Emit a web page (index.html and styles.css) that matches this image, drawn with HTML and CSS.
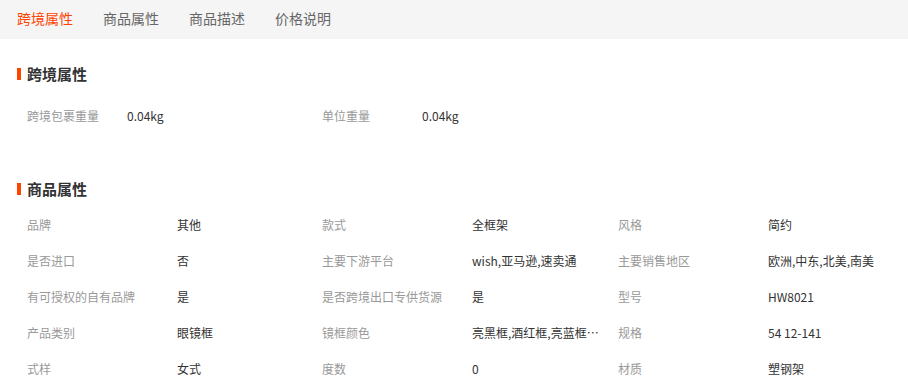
FILE: index.html
```html
<!DOCTYPE html>
<html lang="zh-CN">
<head>
  <meta charset="UTF-8">
  <meta name="viewport" content="width=device-width, initial-scale=1.0">
  <title>商品详情</title>
  <link rel="stylesheet" href="styles.css">
</head>
<body>
  <div class="tabs">
    <a href="#cross" class="tab active">跨境属性</a>
    <a href="#attrs" class="tab">商品属性</a>
    <a href="#desc" class="tab">商品描述</a>
    <a href="#price" class="tab">价格说明</a>
  </div>

  <div class="section section-cross" id="cross">
    <h2 class="section-title">跨境属性</h2>
    <div class="attr-grid">
      <div class="attr-item">
        <span class="attr-label">跨境包裹重量</span>
        <span class="attr-value">0.04kg</span>
      </div>
      <div class="attr-item">
        <span class="attr-label">单位重量</span>
        <span class="attr-value">0.04kg</span>
      </div>
    </div>
  </div>

  <div class="section section-attrs" id="attrs">
    <h2 class="section-title">商品属性</h2>
    <div class="attr-grid">
      <div class="attr-item"><span class="attr-label">品牌</span><span class="attr-value">其他</span></div>
      <div class="attr-item"><span class="attr-label">款式</span><span class="attr-value">全框架</span></div>
      <div class="attr-item"><span class="attr-label">风格</span><span class="attr-value">简约</span></div>

      <div class="attr-item"><span class="attr-label">是否进口</span><span class="attr-value">否</span></div>
      <div class="attr-item"><span class="attr-label">主要下游平台</span><span class="attr-value">wish,亚马逊,速卖通</span></div>
      <div class="attr-item"><span class="attr-label">主要销售地区</span><span class="attr-value">欧洲,中东,北美,南美</span></div>

      <div class="attr-item"><span class="attr-label">有可授权的自有品牌</span><span class="attr-value">是</span></div>
      <div class="attr-item"><span class="attr-label">是否跨境出口专供货源</span><span class="attr-value">是</span></div>
      <div class="attr-item"><span class="attr-label">型号</span><span class="attr-value">HW8021</span></div>

      <div class="attr-item"><span class="attr-label">产品类别</span><span class="attr-value">眼镜框</span></div>
      <div class="attr-item"><span class="attr-label">镜框颜色</span><span class="attr-value" title="亮黑框,酒红框,亮蓝框,玳瑁框,透明框">亮黑框,酒红框,亮蓝框…</span></div>
      <div class="attr-item"><span class="attr-label">规格</span><span class="attr-value">54 12-141</span></div>

      <div class="attr-item"><span class="attr-label">式样</span><span class="attr-value">女式</span></div>
      <div class="attr-item"><span class="attr-label">度数</span><span class="attr-value">0</span></div>
      <div class="attr-item"><span class="attr-label">材质</span><span class="attr-value">塑钢架</span></div>
    </div>
  </div>
</body>
</html>
```

FILE: styles.css
```css
:root {
  --accent: #ff4400;
  --tab-bg: #f5f5f5;
  --text: #333333;
  --text-light: #999999;
  --tab-text: #666666;
}

* {
  margin: 0;
  padding: 0;
  box-sizing: border-box;
}

body {
  font-family: "Microsoft YaHei", "Noto Sans CJK SC", "Liberation Sans", sans-serif;
  font-size: 12px;
  color: var(--text);
  background-color: #ffffff;
}

/* вкладки сверху */
.tabs {
  display: flex;
  align-items: center;
  gap: 30px;
  height: 39px;
  padding-left: 17px;
  padding-bottom: 4px;
  background-color: var(--tab-bg);
}

.tab {
  font-size: 14px;
  color: var(--tab-text);
  text-decoration: none;
}

.tab.active {
  color: var(--accent);
}

.section {
  padding-left: 27px;
}

.section-cross {
  padding-top: 25px;
}

.section-attrs {
  padding-top: 46px;
}

.section-title {
  position: relative;
  font-size: 15px;
  font-weight: bold;
  line-height: 20px;
  color: var(--text);
}

/* оранжевая полоска слева от заголовка */
.section-title::before {
  content: "";
  position: absolute;
  left: -10px;
  top: 4px;
  width: 4px;
  height: 12px;
  background-color: var(--accent);
}

.attr-grid {
  display: grid;
  grid-template-columns: 295px 296px 290px;
}

.section-cross .attr-grid {
  margin-top: 13px;
}

.section-attrs .attr-grid {
  margin-top: 7px;
}

.attr-item {
  display: flex;
  align-items: center;
  height: 36px;
}

.attr-label {
  flex: 0 0 150px;
  color: var(--text-light);
  white-space: nowrap;
}

.section-cross .attr-label {
  flex-basis: 100px;
}

.attr-value {
  color: var(--text);
  white-space: nowrap;
}
```
